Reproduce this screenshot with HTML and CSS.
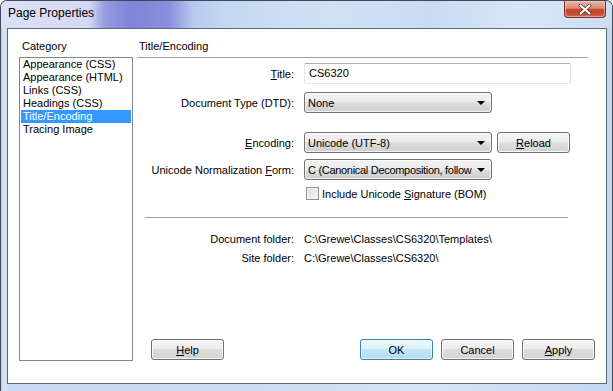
FILE: index.html
```html
<!DOCTYPE html>
<html lang="en">
<head>
    <meta charset="UTF-8">
    <title>Page Properties</title>
    <link rel="stylesheet" href="styles.css">
</head>
<body>

    <div class="window">
        <div class="titlebar">
            <span class="title">Page Properties</span>
            <button type="button" class="close" aria-label="Close">
                <svg width="14" height="11" viewBox="0 0 14 11">
                    <path d="M2.5 1.5 L11.5 9.5 M11.5 1.5 L2.5 9.5" stroke="#5a3a34" stroke-width="3.6" stroke-linecap="round"/>
                    <path d="M2.5 1.5 L11.5 9.5 M11.5 1.5 L2.5 9.5" stroke="#fff" stroke-width="2" stroke-linecap="round"/>
                </svg>
            </button>
        </div>

        <div class="client">
            <div class="category">
                <div class="cat-label">Category</div>
                <ul class="cat-list">
                    <li>Appearance (CSS)</li>
                    <li>Appearance (HTML)</li>
                    <li>Links (CSS)</li>
                    <li>Headings (CSS)</li>
                    <li class="selected">Title/Encoding</li>
                    <li>Tracing Image</li>
                </ul>
            </div>

            <div class="panel">
                <div class="panel-head">Title/Encoding</div>

                <div class="form">
                    <div class="row">
                        <label class="label"><u>T</u>itle:</label>
                        <div class="controls">
                            <div class="input">CS6320</div>
                        </div>
                    </div>
                    <div class="row row-dtd">
                        <label class="label">Document Type (DTD):</label>
                        <div class="controls">
                            <div class="select"><span class="value">None</span><span class="arrow"></span></div>
                        </div>
                    </div>
                    <div class="row row-enc">
                        <label class="label"><u>E</u>ncoding:</label>
                        <div class="controls">
                            <div class="select"><span class="value">Unicode (UTF-8)</span><span class="arrow"></span></div>
                            <button type="button" class="btn"><u>R</u>eload</button>
                        </div>
                    </div>
                    <div class="row row-norm">
                        <label class="label">Unicode Normalization <u>F</u>orm:</label>
                        <div class="controls">
                            <div class="select"><span class="value value-long">C (Canonical Decomposition, follow</span><span class="arrow"></span></div>
                        </div>
                    </div>
                    <div class="row row-check">
                        <span></span>
                        <div class="controls">
                            <span class="checkbox"></span>
                            <span>Include Unicode <u>S</u>ignature (BOM)</span>
                        </div>
                    </div>

                    <div class="separator"></div>

                    <div class="row row-info">
                        <span class="label">Document folder:</span>
                        <span>C:\Grewe\Classes\CS6320\Templates\</span>
                    </div>
                    <div class="row row-info row-site">
                        <span class="label">Site folder:</span>
                        <span>C:\Grewe\Classes\CS6320\</span>
                    </div>
                </div>

                <div class="actions">
                    <button type="button" class="btn"><u>H</u>elp</button>
                    <button type="button" class="btn btn-default push">OK</button>
                    <button type="button" class="btn">Cancel</button>
                    <button type="button" class="btn"><u>A</u>pply</button>
                </div>
            </div>
        </div>
    </div>

</body>
</html>
```

FILE: styles.css
```css
* {
    box-sizing: border-box;
}
body {
    margin: 0;
    font-family: "Liberation Sans", Arial, sans-serif;
    font-size: 11px;
    color: #000;
}
u {
    text-decoration: underline;
    text-underline-offset: 1px;
}

/* window frame */
.window {
    width: 613px;
    height: 391px;
    border: 1px solid #3d4a5a;
    border-bottom: none;
    border-radius: 7px 7px 0 0;
    background: linear-gradient(to right, #b9cde9 0, #d9e6f6 3px, #c7daf1 7px, #cbdcf2 40%, #d5e5f7 70%, #c4d8f0 100%);
    display: flex;
    flex-direction: column;
    overflow: hidden;
}
.titlebar {
    height: 27px;
    flex: none;
    display: flex;
    justify-content: space-between;
    align-items: flex-start;
    padding: 0 6px 0 7px;
    background: linear-gradient(to right, #dde1f5 0, #d4d9f3 88px, #959ae0 104px, #7e84d7 130px, #8a90dc 168px, #b7c9ee 192px, #c4d8f1 225px, #d0e2f5 330px, #c8dbf2 430px, #d7e7f8 520px, #cbdef3 613px);
}
.title {
    margin-top: 5px;
    font-size: 12px;
    line-height: 15px;
}
.close {
    width: 42px;
    height: 17px;
    margin: 0;
    padding: 0;
    border: 1px solid #7a3224;
    border-top: none;
    border-radius: 0 0 4px 4px;
    background: linear-gradient(#eab3a5 0, #dc8c7a 45%, #c9482f 52%, #c1442b 75%, #d97359 100%);
    box-shadow: inset 0 0 0 1px rgba(255, 210, 200, 0.5);
    display: flex;
    align-items: center;
    justify-content: center;
}

/* white client area */
.client {
    height: 356px;
    flex: none;
    margin: 0 5px 0 6px;
    background: #fff;
    border: 1px solid #5b6878;
    padding: 10px 11px 0 11px;
    display: flex;
    gap: 4px;
}

.category {
    width: 114px;
    flex: none;
}
.cat-label {
    line-height: 14px;
    padding-left: 3px;
    margin-bottom: 4px;
}
.cat-list {
    list-style: none;
    margin: 0;
    padding: 0 1px;
    height: 304px;
    border: 1px solid #828790;
}
.cat-list li {
    height: 13px;
    line-height: 13px;
    padding-left: 2px;
    white-space: nowrap;
}
.cat-list li.selected {
    background: #3399ff;
    color: #fff;
}

.panel {
    flex: 1;
    height: 322px;
    display: flex;
    flex-direction: column;
}
.panel-head {
    line-height: 14px;
    padding: 0 0 4px 2px;
    margin-right: 7px;
    border-bottom: 1px solid #a0a0a0;
}

.form {
    padding-top: 5px;
}
.row {
    display: grid;
    grid-template-columns: 157px 1fr;
    column-gap: 10px;
    align-items: center;
}
.label {
    text-align: right;
    white-space: nowrap;
}
.controls {
    display: flex;
    align-items: center;
    gap: 5px;
}
.row-dtd { margin-top: 8px; }
.row-enc { margin-top: 19px; }
.row-norm { margin-top: 6px; }
.row-check {
    margin-top: 5px;
    height: 17px;
}
.row-check .controls {
    gap: 3px;
    padding-left: 2px;
}
.row-info {
    margin-top: 14px;
    line-height: 14px;
}
.row-site { margin-top: 5px; }

.input {
    width: 267px;
    height: 21px;
    line-height: 19px;
    padding-left: 4px;
    border: 1px solid;
    border-color: #abadb3 #dbdfe6 #e3e9ef #e2e3ea;
    border-radius: 2px;
}
.select {
    width: 188px;
    height: 21px;
    border: 1px solid #707070;
    border-radius: 3px;
    background: linear-gradient(#f2f2f2 0, #ebebeb 50%, #dddddd 50%, #cfcfcf 100%);
    box-shadow: inset 0 0 0 1px rgba(255, 255, 255, 0.7);
    display: flex;
    align-items: center;
    padding: 0 6px 0 3px;
}
.select .value {
    flex: 1;
    white-space: nowrap;
    overflow: hidden;
    margin-right: 13px;
}
.select .value-long {
    letter-spacing: -0.3px;
    margin-right: 2px;
}
.arrow {
    width: 0;
    height: 0;
    flex: none;
    border-left: 4px solid transparent;
    border-right: 4px solid transparent;
    border-top: 4px solid #000;
}
.checkbox {
    width: 13px;
    height: 13px;
    border: 1px solid #8f8f8f;
    background: linear-gradient(135deg, #d8d8d8, #f9f9f9);
    box-shadow: inset 0 0 0 1px #f4f4f4;
}
.separator {
    height: 1px;
    width: 423px;
    margin: 15px 0 0 8px;
    background: #a0a0a0;
}

/* buttons */
.btn {
    width: 73px;
    height: 21px;
    margin: 0;
    padding: 0;
    border: 1px solid #707070;
    border-radius: 3px;
    background: linear-gradient(#f4f4f4 0, #ececec 50%, #dedede 50%, #d2d2d2 100%);
    box-shadow: inset 0 0 0 1px rgba(255, 255, 255, 0.8);
    font-family: inherit;
    font-size: 11px;
    color: #000;
}
.btn-default {
    border-color: #3c7fb1;
    background: linear-gradient(#eaf6fd 0, #dcf1fc 50%, #c4e6f8 50%, #b2dcf3 100%);
    box-shadow: inset 0 0 0 1px rgba(255, 255, 255, 0.6);
}
.actions {
    margin-top: auto;
    margin-bottom: 1px;
    padding-left: 14px;
    display: flex;
    gap: 8px;
}
.push {
    margin-left: auto;
}
```
